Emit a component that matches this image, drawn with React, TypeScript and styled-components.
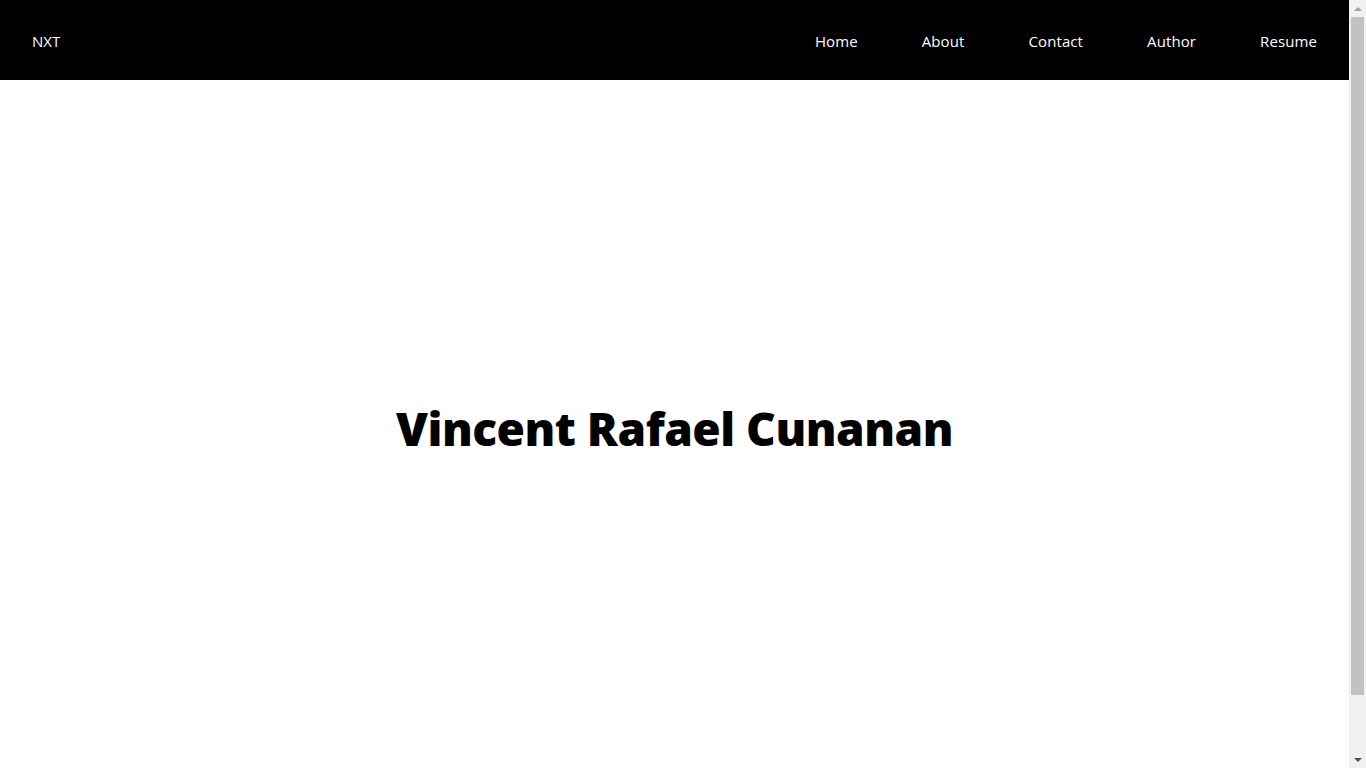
import React from "react";
import styled, { createGlobalStyle } from "styled-components";

const GlobalStyle = createGlobalStyle`
  html, body {
    margin: 0;
    padding: 0;
    background: #ffffff;
  }
  body {
    font-family: "Open Sans", "Noto Sans", "Liberation Sans", sans-serif;
  }
  * { box-sizing: border-box; }
`;

const Page = styled.div`
  width: calc(100% - 17px);
`;

const NavBar = styled.header`
  height: 80px;
  background: #000000;
  display: flex;
  align-items: center;
  justify-content: space-between;
  padding: 0 32px;
`;

const Brand = styled.a`
  color: #ffffff;
  font-size: 15px;
  line-height: 20px;
  margin-top: 2px;
  text-decoration: none;
`;

const NavList = styled.nav`
  display: flex;
  align-items: center;
  gap: 64px;
  margin-top: 2px;
`;

const NavLink = styled.a`
  color: #ffffff;
  font-size: 15px;
  line-height: 20px;
  text-decoration: none;
  letter-spacing: 0.1px;
`;

const Hero = styled.main`
  height: 696px;
  display: flex;
  align-items: center;
  justify-content: center;
`;

const Title = styled.h1`
  margin: 0;
  font-size: 46px;
  font-weight: 800;
  color: #000000;
  letter-spacing: -0.5px;
`;

const Footer = styled.div`
  height: 55px;
`;

const ScrollTrack = styled.div`
  position: fixed;
  top: 0;
  right: 0;
  width: 17px;
  height: 100vh;
  background: #f1f1f1;
  display: flex;
  flex-direction: column;
  align-items: center;
`;

const ScrollArrow = styled.div<{ $down?: boolean; $dark?: boolean }>`
  height: 17px;
  width: 17px;
  display: flex;
  align-items: center;
  justify-content: center;
  &::before {
    content: "";
    width: 0;
    height: 0;
    border-left: 4px solid transparent;
    border-right: 4px solid transparent;
    ${(p) =>
      p.$down
        ? `border-top: 4px solid ${p.$dark ? "#505050" : "#a3a3a3"};`
        : `border-bottom: 4px solid ${p.$dark ? "#505050" : "#a3a3a3"};`}
  }
`;

const ScrollThumbArea = styled.div`
  flex: 1;
  width: 100%;
  padding: 0 2px;
`;

const ScrollThumb = styled.div`
  height: 678px;
  width: 100%;
  background: #c1c1c1;
`;

export default function App() {
  return (
    <>
      <GlobalStyle />
      <Page>
        <NavBar>
          <Brand href="#">NXT</Brand>
          <NavList>
            <NavLink href="#">Home</NavLink>
            <NavLink href="#">About</NavLink>
            <NavLink href="#">Contact</NavLink>
            <NavLink href="#">Author</NavLink>
            <NavLink href="#">Resume</NavLink>
          </NavList>
        </NavBar>
        <Hero>
          <Title>Vincent Rafael Cunanan</Title>
        </Hero>
        <Footer />
      </Page>
      <ScrollTrack>
        <ScrollArrow />
        <ScrollThumbArea>
          <ScrollThumb />
        </ScrollThumbArea>
        <ScrollArrow $down $dark />
      </ScrollTrack>
    </>
  );
}
